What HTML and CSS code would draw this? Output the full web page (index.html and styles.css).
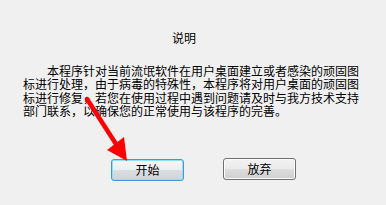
FILE: index.html
```html
<!DOCTYPE html>
<html lang="zh-CN">
<head>
<meta charset="utf-8">
<link rel="stylesheet" href="styles.css">
</head>
<body>
<div class="dialog">
  <div class="title">说明</div>
  <p class="desc">本程序针对当前流氓软件在用户桌面建立或者感染的顽固图标进行处理，由于病毒的特殊性，本程序将对用户桌面的顽固图标进行修复，若您在使用过程中遇到问题请及时与我方技术支持部门联系，以确保您的正常使用与该程序的完善。</p>
  <div class="buttons">
    <button class="btn btn-focus">开始</button>
    <button class="btn">放弃</button>
  </div>
  <svg class="arrow" width="386" height="205" viewBox="0 0 386 205">
    <line x1="87" y1="99" x2="116" y2="144" stroke="#ff0000" stroke-width="4.5" stroke-linecap="round"/>
    <polygon points="107,150 124,137 127,161" fill="#ff0000"/>
  </svg>
</div>
</body>
</html>
```

FILE: styles.css
```css
html, body {
  margin: 0;
  padding: 0;
  background: #f0f0f0;
}
.dialog {
  position: relative;
  width: 386px;
  height: 205px;
  background: #f0f0f0;
  font-family: "Noto Sans CJK SC", "Noto Sans", sans-serif;
  font-size: 12px;
  color: #000;
  box-sizing: border-box;
  padding-top: 31px;
}
.title {
  line-height: 13px;
  padding-left: 172px;
}
.desc {
  margin: 20px 0 0 23px;
  width: 337px;
  text-indent: 24px;
  line-height: 13.34px;
}
.buttons {
  display: flex;
  align-items: flex-start;
  gap: 39px;
  margin: 41px 0 0 111px;
}
.btn {
  width: 73px;
  height: 22px;
  box-sizing: border-box;
  padding: 0;
  font-family: "Noto Sans CJK SC", "Noto Sans", sans-serif;
  font-size: 12px;
  line-height: 18px;
  color: #000;
  border: 1px solid #707070;
  border-radius: 3px;
  background: linear-gradient(to bottom, #f2f2f2 0%, #ebebeb 50%, #dddddd 51%, #cfcfcf 100%);
  box-shadow: inset 0 0 0 1px #fcfcfc;
}
.btn-focus {
  margin-top: 1px;
  border-color: #3c9ad8;
  box-shadow: inset 0 0 0 1px #8fe0f8;
  background: linear-gradient(to bottom, #f4f6f7 0%, #eceef0 50%, #dcdfe1 51%, #d0d3d5 100%);
}
.arrow {
  position: absolute;
  left: 0;
  top: 0;
  pointer-events: none;
}
```
